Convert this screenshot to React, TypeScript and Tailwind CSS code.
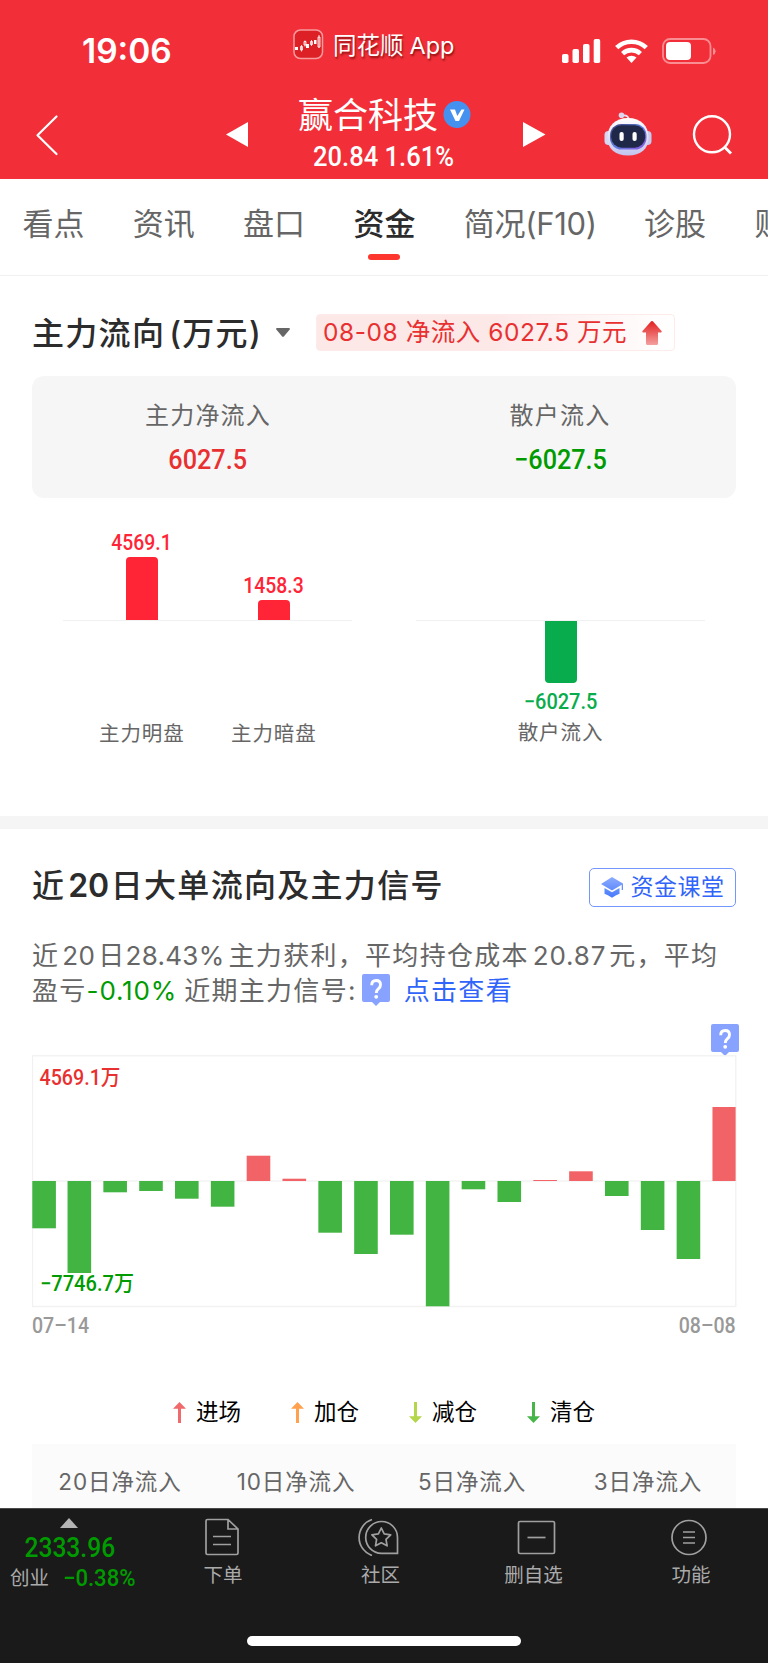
import React from "react";

const UI = "font-['Inter','Noto_Sans_CJK_SC',sans-serif]";
const DIN = "font-['Roboto','Noto_Sans_CJK_SC',sans-serif] inline-block whitespace-nowrap leading-none";

function StatusBar() {
  return (
    <div className="flex h-[96px] items-start">
      <div className="ml-[82px] mt-[35px] w-[211px] text-[33.500px] font-semibold leading-none">19:06</div>
      <svg className="mt-[29px] h-[31px] w-[31px] shrink-0" viewBox="0 0 31 31" fill="none">
        <rect x="1" y="1" width="28.5" height="28.5" rx="6.5" fill="#dc2026" stroke="#f79a9d" strokeWidth="1.500" />
        <path d="M2 18h3v3H2zM13 15h3v4h-3zM21 11h2.500v4H21z" fill="#fff" />
        <path d="M7.500 17.500h2v3.500h-2zM11 12.500h2v3.500h-2zM17.500 12.500h2v3h-2zM25 8h2v10h-2zM8.500 16v6.500M12 11.500v6M18.500 11v6M26 6v13" stroke="#fff" strokeWidth=".8" />
      </svg>
      <div className="ml-[9px] mt-[34px] flex w-[229px] items-center gap-[6px] whitespace-nowrap text-[23.500px] leading-none [text-shadow:1px_2px_2px_rgba(90,0,0,0.65)]">
        <span>同花顺</span>
        <span>App</span>
      </div>
      <svg className="mt-[39px] h-[25px] w-[40px] shrink-0" viewBox="0 0 40 25" fill="#fff">
        <rect x="0" y="15" width="6.500" height="9" rx="1.800" />
        <rect x="10.500" y="10" width="6.500" height="14" rx="1.800" />
        <rect x="21" y="5" width="6.500" height="19" rx="1.800" />
        <rect x="31.700" y="0" width="6.500" height="24" rx="1.800" />
      </svg>
      <svg className="ml-[13px] mt-[39px] h-[25px] w-[33px] shrink-0" viewBox="0 0 33 25" fill="none" stroke="#fff" strokeWidth="4.600">
        <path d="M1.700 8.700A21.500 21.500 0 0 1 31.300 8.700" />
        <path d="M7.600 14.600A13.200 13.200 0 0 1 25.400 14.600" />
        <path d="M11.500 18.600A7.600 7.600 0 0 1 21.500 18.600L16.500 24z" fill="#fff" stroke="none" />
      </svg>
      <svg className="ml-[14px] mt-[38px] h-[26px] w-[55px] shrink-0" viewBox="0 0 55 26">
        <rect x="1" y="1" width="47.500" height="24" rx="7" fill="none" stroke="#f98d92" strokeWidth="1.800" />
        <rect x="4" y="4" width="25" height="18" rx="4" fill="#fff" />
        <path d="M51 9.500q2.600 1 2.600 3.700T51 17z" fill="#f98d92" />
      </svg>
    </div>
  );
}

function NavBar() {
  return (
    <div className="flex h-[83px] items-start">
      <svg className="ml-[34px] mt-[18px] h-[42px] w-[26px] shrink-0" viewBox="0 0 26 42" fill="none" stroke="#fff" strokeWidth="2.200">
        <path d="M22.500 2.500 3.500 21.300l19 18.700" strokeLinecap="round" strokeLinejoin="round" />
      </svg>
      <svg className="ml-[166px] mt-[26px] h-[25px] w-[22px] shrink-0" viewBox="0 0 22 25">
        <path d="M0 12.500 22 0v25z" fill="#fff" />
      </svg>
      <div className="ml-[50px] w-[174px] pt-[1px]">
        <div className="flex items-center gap-[5px] whitespace-nowrap">
          <span className="text-[35px] leading-[36px]">赢合科技</span>
          <svg className="h-[28px] w-[28px] shrink-0" viewBox="0 0 28 28">
            <circle cx="14" cy="13.500" r="13.500" fill="#4591f0" />
            <path d="M7 8.500h5l2.300 6.500L18.500 8.500h3L16 20h-3.500z" fill="#fff" />
          </svg>
        </div>
        <div className="flex h-[40px] w-[172px] justify-center pt-[11px]">
          <span className={`${DIN} scale-x-[0.945] text-[27px] font-medium`}>20.84 1.61%</span>
        </div>
      </div>
      <svg className="ml-[51px] mt-[26px] h-[25px] w-[23px] shrink-0" viewBox="0 0 23 25">
        <path d="M22.500 12.500 0 0v25z" fill="#fff" />
      </svg>
      <svg className="ml-[58px] mt-[15px] h-[46px] w-[48px] shrink-0" viewBox="0 0 48 46">
        <defs>
          <linearGradient id="shell" x1="0" y1="0" x2="0" y2="1">
            <stop offset="0" stopColor="#ffffff" />
            <stop offset="1" stopColor="#c3c4ee" />
          </linearGradient>
          <linearGradient id="rim" x1="0" y1="0" x2="1" y2="1">
            <stop offset="0" stopColor="#3d3b74" />
            <stop offset=".5" stopColor="#5e7fe0" />
            <stop offset="1" stopColor="#8d55e0" />
          </linearGradient>
        </defs>
        <path d="M18 4.500q6-1 7 4" fill="none" stroke="#e6e3f5" strokeWidth="1.700" />
        <circle cx="17.500" cy="4.200" r="2.800" fill="#d9d6ee" />
        <rect x="0.500" y="20" width="8" height="14" rx="4" fill="#d5d6f3" />
        <rect x="39.500" y="20" width="8" height="14" rx="4" fill="#c9caf0" />
        <path d="M24 7C37 7 44.500 15 44.500 26.500 44.500 38 37 44.500 24 44.500S3.500 38 3.500 26.500C3.500 15 11 7 24 7z" fill="url(#shell)" />
        <rect x="6" y="13" width="36.500" height="25.500" rx="11.500" fill="url(#rim)" />
        <rect x="7.200" y="14.200" width="34" height="22.500" rx="10.500" fill="#1f2849" />
        <rect x="15.500" y="21" width="4.200" height="9" rx="2" fill="#fff" />
        <rect x="28.500" y="21" width="4.200" height="9" rx="2" fill="#fff" />
      </svg>
      <svg className="ml-[40px] mt-[18px] h-[42px] w-[42px] shrink-0" viewBox="0 0 42 42" fill="none" stroke="#fff" strokeWidth="2.400">
        <circle cx="20" cy="20.300" r="18" />
        <path d="m32 32.500 7 7" strokeWidth="2.800" />
      </svg>
    </div>
  );
}

const TABS = ["看点", "资讯", "盘口", "资金", "简况(F10)", "诊股", "财务"];

function Tabs() {
  return (
    <div className="flex h-[97px] gap-[48.300px] overflow-hidden border-b-[1.500px] border-[#f0f0f0] pl-[22.500px] pt-[29px] text-[31px] text-[#666]">
      {TABS.map((t) => (
        <div
          key={t}
          className={`shrink-0 whitespace-nowrap leading-[32px] ${t === "资金" ? "font-medium text-[#2c2c2c]" : ""} ${t.length > 2 ? "-mr-[1px] tracking-[-0.280px]" : ""}`}
        >
          {t}
          {t === "资金" && <div className="mx-auto mt-[14px] h-[6px] w-[32px] rounded-full bg-[#fd372d]" />}
        </div>
      ))}
    </div>
  );
}

function Help() {
  return (
    <svg className="h-[32px] w-[28px] shrink-0" viewBox="0 0 28 32">
      <path d="M2 0h24q2 0 2 2v24q0 2-2 2h-8l-4 4-4-4H2q-2 0-2-2V2q0-2 2-2z" fill="#88a3ff" />
      <path d="M9.700 11.200q0-4.700 4.500-4.700 4.300 0 4.300 4.200 0 2.300-2 4-2.200 1.800-2.200 4.300" fill="none" stroke="#fff" strokeWidth="2.900" />
      <circle cx="14.200" cy="22.800" r="1.900" fill="#fff" />
    </svg>
  );
}

function MainFlow() {
  return (
    <section className="h-[540px] px-8">
      <div className="flex h-[100px] items-start pt-[38px]">
        <div className="mt-[3px] w-[244px] whitespace-nowrap text-[32px] font-medium leading-[34px] tracking-[1.300px] text-[#2c2c2c]">
          主力流向<span className="ml-[4px]">(万元)</span>
        </div>
        <svg className="mt-[14px] h-[9px] w-[14px] shrink-0" viewBox="0 0 14 9">
          <path d="M1 0h12q1.500.5.500 1.800L7.800 8.500Q7 9.300 6.200 8.500L.5 1.800Q-.5.500 1 0z" fill="#666" />
        </svg>
        <div className="ml-[26px] flex h-[37px] w-[359px] items-center rounded-[4px] border-[1.500px] border-[#fdeaea] bg-gradient-to-r from-[#fde8e8] from-50% to-white pl-[6px] text-[#e93030]">
          <span className="w-[319px] whitespace-nowrap text-[24.500px] leading-none tracking-[0.550px]">08-08 净流入 6027.5 万元</span>
          <svg className="h-[24px] w-[20px]" viewBox="0 0 20 24">
            <defs>
              <linearGradient id="up" x1="0" y1="0" x2="0" y2="1">
                <stop offset="0" stopColor="#e31f1f" />
                <stop offset="1" stopColor="#f4a0a0" />
              </linearGradient>
            </defs>
            <path d="M10 0q.8 0 1.500.9l8 9q.8 1.500-.8 1.600H16v11q0 1.500-1.500 1.500h-9Q4 24 4 22.500v-11H1.300Q-.3 11.400.5 9.900l8-9Q9.200 0 10 0z" fill="url(#up)" />
          </svg>
        </div>
      </div>
      <div className="grid h-[122px] grid-cols-2 rounded-[12px] bg-[#f6f6f6] pt-[26px] text-center">
        <div>
          <div className="text-[24px] leading-[27px] tracking-[1.200px] text-[#666]">主力净流入</div>
          <span className={`${DIN} mt-[17px] scale-x-[0.9] text-[28px] font-medium text-[#e93030]`}>6027.5</span>
        </div>
        <div>
          <div className="text-[24px] leading-[27px] tracking-[1.200px] text-[#666]">散户流入</div>
          <span className={`${DIN} ml-[1px] mt-[17px] scale-x-[0.9] text-[28px] font-medium text-[#009b00]`}>−6027.5</span>
        </div>
      </div>
      <div className="grid h-[122.500px] grid-cols-[289px_289px] gap-[64px] pl-[31px]">
        <div className="flex items-end gap-[66px] border-b-[1.500px] border-[#f1f1f1] pl-[46px]">
          <div className="flex w-[66px] flex-col items-center">
            <span className={`${DIN} mb-[3px] scale-x-[0.9] text-[21.500px] font-medium text-[#ff2436]`}>4569.1</span>
            <div className="h-[63px] w-[32px] rounded-t-[4px] bg-[#ff2436]" />
          </div>
          <div className="flex w-[66px] flex-col items-center">
            <span className={`${DIN} mb-[3px] scale-x-[0.9] text-[21.500px] font-medium text-[#ff2436]`}>1458.3</span>
            <div className="h-[20px] w-[32px] rounded-t-[4px] bg-[#ff2436]" />
          </div>
        </div>
        <div className="border-b-[1.500px] border-[#f1f1f1]" />
      </div>
      <div className="grid h-[139px] grid-cols-[289px_289px] gap-[64px] pl-[31px] text-[20.500px] leading-none tracking-[0.900px] text-[#666]">
        <div className="flex gap-[46px] whitespace-nowrap pl-[36px] pt-[103px]">
          <span className="w-[86px]">主力明盘</span>
          <span>主力暗盘</span>
        </div>
        <div className="flex flex-col items-center">
          <div className="h-[62px] w-[32px] rounded-b-[4px] bg-[#09ac4c]" />
          <span className={`${DIN} mt-[8px] scale-x-[0.93] text-[21.500px] font-medium tracking-normal text-[#09ac4c]`}>−6027.5</span>
          <span className="mt-[11px]">散户流入</span>
        </div>
      </div>
    </section>
  );
}

const FLOWS = [-47.3, -92, -11.3, -10, -17.7, -25.7, 25.3, 2.3, -51.7, -73, -53.7, -125.3, -8.3, -21, 1, 9.7, -15, -49, -78, 74];

function FlowChart() {
  return (
    <svg className="mt-[-1px] h-[253px] w-[706px] shrink-0 font-['Roboto','Noto_Sans_CJK_SC',sans-serif]" viewBox="0 0 706 253">
      <rect x=".5" y=".8" width="703.300" height="250.700" fill="none" stroke="#f1f1f1" strokeWidth="1.300" />
      <path d="M0 126h704" stroke="#f3f3f3" strokeWidth="1.500" />
      {FLOWS.map((v, i) => {
        const x = Math.max(0.3, i * 35.83 - 0.3);
        return (
          <rect key={i} x={x} y={v > 0 ? 126 - v : 126} width={Math.min(23.6, 703.6 - x)} height={Math.abs(v)} fill={v > 0 ? "#f16366" : "#42b442"} />
        );
      })}
      <text x="7.500" y="29.500" fontSize="21.500" fontWeight="500" fill="#e93030" textLength="81" lengthAdjust="spacingAndGlyphs">4569.1万</text>
      <text x="8" y="236" fontSize="21.500" fontWeight="500" fill="#009b00" textLength="94" lengthAdjust="spacingAndGlyphs">−7746.7万</text>
    </svg>
  );
}

function Arrow({ color, down }: { color: string; down?: boolean }) {
  return (
    <svg className={`h-[21px] w-[13px] shrink-0 ${down ? "rotate-180" : ""}`} viewBox="0 0 13 21">
      <path d="M6.500 0 13 6.800H8V21H5V6.800H0z" fill={color} />
    </svg>
  );
}

const LEGEND = [
  { label: "进场", color: "#f0696b", down: false },
  { label: "加仓", color: "#ffa24f", down: false },
  { label: "减仓", color: "#b3d64a", down: true },
  { label: "清仓", color: "#47b649", down: true },
];

function Signals() {
  return (
    <section className="h-[679px] overflow-hidden px-8">
      <div className="flex h-[109px] items-start justify-between pt-[39px]">
        <h2 className="mt-[1px] whitespace-nowrap text-[32px] font-medium leading-[34px] tracking-[1.300px] text-[#2c2c2c]">
          近<span className="ml-[3px] mr-[2px] font-semibold tracking-[-0.300px]">20</span>日大单流向及主力信号
        </h2>
        <div className="flex h-[39px] w-[147.500px] items-center rounded-[5px] border-[1.500px] border-[#7396ff] pl-[11px] text-[#3164fa]">
          <svg className="h-[21px] w-[22px] shrink-0" viewBox="0 0 22 21">
            <defs>
              <linearGradient id="cap" x1="0" y1="0" x2="0" y2="1">
                <stop offset="0" stopColor="#8eacff" />
                <stop offset="1" stopColor="#4579fb" />
              </linearGradient>
            </defs>
            <path d="m11 0 11 6.500V13h-1.300V7.800L11 13.500 0 7zM3.500 11l7.500 4.300L18.500 11v5.700q-4 1.600-7.500 4-3.500-2.400-7.500-4z" fill="url(#cap)" />
          </svg>
          <span className="ml-[8px] whitespace-nowrap text-[23px] leading-none tracking-[0.500px]">资金课堂</span>
        </div>
      </div>
      <div className="h-[86px] whitespace-nowrap text-[26px] leading-[35.500px] tracking-[1.300px] text-[#666]">
        <div className="flex">
          <span>近</span>
          <span className="ml-[3px] tracking-[0.300px]">20</span>
          <span className="ml-[3px]">日</span>
          <span className="tracking-[0.300px]">28.43%</span>
          <span className="ml-[4px]">主力获利，平均持仓成本</span>
          <span className="ml-[4px] tracking-[0.800px]">20.87</span>
          <span className="ml-[3px]">元，平均</span>
        </div>
        <div className="-mt-[1px] flex">
          <span>盈亏</span>
          <span className="tracking-[0.850px] text-[#009b00]">-0.10%</span>
          <span className="ml-[7px]">近期主力信号:</span>
          <span className="ml-[5px] mt-[1px]"><Help /></span>
          <span className="ml-[14px] text-[#3164fa]">点击查看</span>
        </div>
      </div>
      <div className="-mr-[2.500px] flex justify-end"><Help /></div>
      <FlowChart />
      <div className="mt-[7px] flex h-[62px] justify-between font-['Roboto'] text-[21.500px] font-medium leading-none text-[#999]">
        <span className="inline-block origin-left scale-x-[0.91] leading-none">07–14</span>
        <span className="inline-block origin-right scale-x-[0.91] leading-none">08–08</span>
      </div>
      <div className="flex h-[67px] items-center pl-[141px] pt-[4px]">
        {LEGEND.map((l) => (
          <div key={l.label} className="flex w-[118px] items-center gap-[10px] whitespace-nowrap text-[22.500px] leading-none text-black">
            <Arrow color={l.color} down={l.down} />
            {l.label}
          </div>
        ))}
      </div>
      <div className="grid h-[82px] grid-cols-4 bg-[#fbfbfb] pt-[27px] text-center text-[22.500px] leading-none tracking-[0.900px] text-[#666]">
        <span>20日净流入</span>
        <span>10日净流入</span>
        <span>5日净流入</span>
        <span>3日净流入</span>
      </div>
    </section>
  );
}

function Item({ label, w, children }: { label: string; w: string; children: React.ReactNode }) {
  return (
    <div className={`flex ${w} shrink-0 flex-col items-center pt-[9px]`}>
      <svg className="h-[38px] w-[48px]" viewBox="-3 0 48 38" fill="none" stroke="#a0a0a0" strokeWidth="1.700">{children}</svg>
      <span className="mt-[10px] whitespace-nowrap text-[19.500px] leading-none">{label}</span>
    </div>
  );
}

function Footer() {
  return (
    <footer className="h-[155px] border-t border-[#4a4a4a] bg-[#1a1a1a] text-[#aaa]">
      <div className="flex h-[127px]">
        <div className="flex w-[144px] shrink-0 flex-col items-center pt-[9px]">
          <svg className="mr-[6px] h-[10px] w-[18px]" viewBox="0 0 18 10"><path d="M9 0l9 10H0z" fill="#b4b4b4" /></svg>
          <span className={`${DIN} mr-[4px] mt-[7px] scale-x-[0.91] text-[27px] font-medium text-[#009b00]`}>2333.96</span>
          <div className="mt-[5px] flex w-full items-start pl-[10px]">
            <span className="mt-[2px] w-[53px] whitespace-nowrap text-[19.500px] leading-none">创业</span>
            <span className={`${DIN} origin-left scale-x-[0.96] text-[23px] font-medium text-[#009b00]`}>−0.38%</span>
          </div>
        </div>
        <Item label="下单" w="w-[158px]">
          <path d="M4 3q0-1.500 1.500-1.500H26L36 11v24q0 1.500-1.500 1.500h-29Q4 36.500 4 35zM26 1.500V11h10M11 18.500h18M11 26.500h18" />
        </Item>
        <Item label="社区" w="w-[157px]">
          <path d="M37.500 19.500v15.800h-16A15.900 15.900 0 1 1 37.500 19.500zM12 1.500A19 19 0 0 0 12 37.500" />
          <path d="m21.300 10 2.900 5.900 6.500.9-4.700 4.600 1.100 6.400-5.800-3-5.800 3 1.100-6.400-4.700-4.600 6.500-.9z" strokeLinejoin="round" />
        </Item>
        <Item label="删自选" w="w-[149px]">
          <rect x="5.500" y="3.500" width="36" height="32" rx="1.500" />
          <path d="M14.500 19.500h18" />
        </Item>
        <Item label="功能" w="w-[166px]">
          <circle cx="19" cy="19.500" r="17" />
          <path d="M13 14h12M13 19.500h12M13 25h12" />
        </Item>
      </div>
      <div className="mx-auto h-[10px] w-[274px] rounded-full bg-white" />
    </footer>
  );
}

export default function App() {
  return (
    <div className={`h-[1663px] w-[768px] overflow-hidden bg-white ${UI}`}>
      <header className="h-[179px] bg-[#f22f38] text-white">
        <StatusBar />
        <NavBar />
      </header>
      <Tabs />
      <MainFlow />
      <div className="h-[13px] bg-[#f5f5f5]" />
      <Signals />
      <Footer />
    </div>
  );
}
